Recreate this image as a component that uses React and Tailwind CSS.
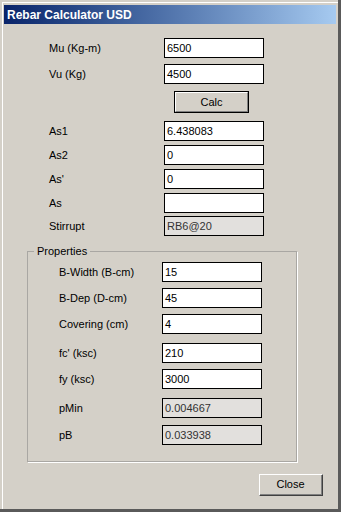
import React from "react";

const font = { fontFamily: '"Liberation Sans", Arial, sans-serif' };

function Field({ value = "", readOnly = false, w = "w-[100px]" }) {
  return (
    <div
      className={`${w} h-[20px] border border-black flex items-center pl-[2px] text-[11px] leading-none ${
        readOnly ? "bg-[#e2e0dd] text-[#333]" : "bg-white text-black"
      }`}
    >
      {value}
    </div>
  );
}

function Row({ label, value, readOnly, mt, labelW }) {
  return (
    <div className={`flex items-center ${mt}`}>
      <div className={`${labelW} text-[11px] leading-none text-black`}>{label}</div>
      <Field value={value} readOnly={readOnly} />
    </div>
  );
}

export default function App() {
  const top = [
    { label: "As1", value: "6.438083", mt: "mt-[8px]" },
    { label: "As2", value: "0", mt: "mt-[4px]" },
    { label: "As'", value: "0", mt: "mt-[4px]" },
    { label: "As", value: "", mt: "mt-[4px]" },
    { label: "Stirrupt", value: "RB6@20", mt: "mt-[3px]", readOnly: true },
  ];
  const props = [
    { label: "B-Width (B-cm)", value: "15", mt: "mt-[4px]" },
    { label: "B-Dep (D-cm)", value: "45", mt: "mt-[6px]" },
    { label: "Covering (cm)", value: "4", mt: "mt-[6px]" },
    { label: "fc' (ksc)", value: "210", mt: "mt-[9px]" },
    { label: "fy (ksc)", value: "3000", mt: "mt-[6px]" },
    { label: "pMin", value: "0.004667", mt: "mt-[9px]", readOnly: true },
    { label: "pB", value: "0.033938", mt: "mt-[7px]", readOnly: true },
  ];
  return (
    <div
      style={font}
      className="w-[341px] h-[512px] bg-[#d4d0c8] border-r-[3px] border-b-[3px] border-r-[#5a5a5a] border-b-[#5a5a5a] overflow-hidden"
    >
      <div className="h-full ml-[2px] mt-[2px] border-l border-t border-white pt-[2px] pl-[1px] pr-[2px] flex flex-col">
        <div className="h-[19px] flex items-center pl-[3px] bg-gradient-to-r from-[#0a246a] to-[#a6caf0] text-white font-bold text-[12px] leading-none">
          Rebar Calculator USD
        </div>
        <div className="flex flex-col">
          <div className="pl-[45px] flex flex-col">
            <Row label="Mu (Kg-m)" value="6500" mt="mt-[14px]" labelW="w-[115px]" />
            <Row label="Vu (Kg)" value="4500" mt="mt-[6px]" labelW="w-[115px]" />
            <div className="mt-[7px] ml-[125px] w-[75px] h-[22px] border border-black">
              <div className="w-full h-full border-t border-l border-t-white border-l-white border-r border-b border-r-[#808080] border-b-[#808080] flex items-center justify-center text-[11px] leading-none text-black">
                Calc
              </div>
            </div>
            {top.map((r) => (
              <Row key={r.label} {...r} labelW="w-[115px]" />
            ))}
          </div>
          <fieldset className="mt-[9px] ml-[23px] w-[270px] border border-[#a9a7a3] pl-[6px] pb-[16px] shadow-[1px_1px_0_#ffffff]">
            <legend className="px-[3px] text-[11px] leading-[13px] text-black">Properties</legend>
            <div className="pl-[25px] flex flex-col">
              {props.map((r) => (
                <Row key={r.label} {...r} labelW="w-[103px]" />
              ))}
            </div>
          </fieldset>
          <div className="mt-[12px] ml-[255px] w-[64px] h-[22px] border-t border-l border-t-white border-l-white border-r border-b border-r-[#404040] border-b-[#404040]">
            <div className="w-full h-full border-r border-b border-r-[#808080] border-b-[#808080] flex items-center justify-center text-[11px] leading-none text-black">
              Close
            </div>
          </div>
        </div>
      </div>
    </div>
  );
}
